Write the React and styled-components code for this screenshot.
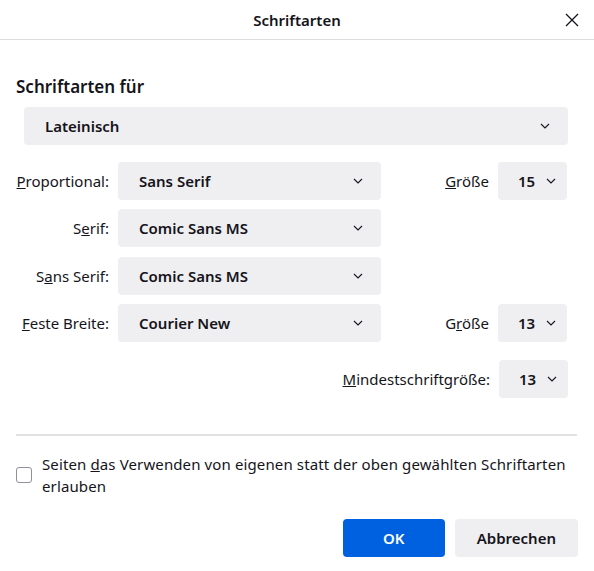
import React from 'react'
import styled, { createGlobalStyle } from 'styled-components'

const GlobalStyle = createGlobalStyle`
  html, body {
    margin: 0;
    padding: 0;
    background: #ffffff;
  }
  body {
    font-family: "Noto Sans", "Open Sans", sans-serif;
    color: #15141a;
    font-size: 15px;
  }
`

const Dialog = styled.div`
  width: 594px;
  height: 571px;
  background: #ffffff;
  display: flex;
  flex-direction: column;
`

const TitleBar = styled.div`
  height: 40px;
  display: grid;
  grid-template-columns: 1fr auto 1fr;
  align-items: center;
  border-bottom: 1px solid #dcdcdf;
  box-sizing: border-box;
`

const Title = styled.div`
  grid-column: 2;
  font-size: 15px;
  font-weight: 600;
`

const CloseButton = styled.button`
  grid-column: 3;
  justify-self: end;
  margin-right: 10px;
  width: 24px;
  height: 24px;
  display: flex;
  align-items: center;
  justify-content: center;
  border: none;
  background: transparent;
  padding: 0;
  color: #15141a;
`

const Body = styled.div`
  padding: 0 16px;
  display: flex;
  flex-direction: column;
`

const Heading = styled.h2`
  margin: 34px 0 0;
  font-size: 17px;
  font-weight: 600;
  line-height: 26px;
`

const Select = styled.div`
  height: 38px;
  box-sizing: border-box;
  background: #efeff1;
  border-radius: 4px;
  display: flex;
  align-items: center;
  justify-content: space-between;
  padding: 0 ${p => (p.$compact ? '11px' : '18px')} 0 ${p => (p.$compact ? '20px' : '21px')};
  font-weight: 600;
  font-size: 15px;
  gap: 6px;
`

const ScriptSelect = styled(Select)`
  margin: 7px 10px 0 8px;
`

const FontGrid = styled.div`
  margin-top: 17px;
  display: grid;
  grid-template-columns: 93px 263px 99px 69px;
  column-gap: 9px;
  row-gap: 9.3px;
  align-items: center;
`

const Label = styled.label`
  text-align: right;
  white-space: nowrap;
  font-size: 15px;
`

const MinRow = styled.div`
  margin-top: 18px;
  display: flex;
  justify-content: flex-end;
  align-items: center;
  gap: 9px;
  padding-right: 10px;
`

const SizeSelect = styled(Select)`
  width: 69px;
`

const Divider = styled.hr`
  margin: 36px 0 0;
  border: none;
  border-top: 2px solid #e2e2e4;
  width: 561px;
`

const CheckRow = styled.label`
  margin-top: 17px;
  display: flex;
  align-items: center;
  gap: 10px;
  line-height: 22px;
  font-size: 15px;
  letter-spacing: 0.12px;
`

const Checkbox = styled.span`
  flex: none;
  width: 16px;
  height: 16px;
  box-sizing: border-box;
  border: 1px solid #8f8f9d;
  border-radius: 3px;
  background: #ffffff;
`

const Buttons = styled.div`
  margin-top: 22px;
  display: flex;
  justify-content: flex-end;
  gap: 10px;
`

const Button = styled.button`
  height: 38px;
  border: none;
  border-radius: 4px;
  font-family: inherit;
  font-size: 15px;
  font-weight: 600;
  padding: 0 22px;
  min-width: ${p => (p.$primary ? '102px' : '121px')};
  background: ${p => (p.$primary ? '#0061e0' : '#efeff1')};
  color: ${p => (p.$primary ? '#ffffff' : '#15141a')};
`

const Chevron = () => (
  <svg width="10" height="6" viewBox="0 0 10 6" fill="none">
    <path d="M1 1l4 4 4-4" stroke="#15141a" strokeWidth="1.1" />
  </svg>
)

const CloseIcon = () => (
  <svg width="14" height="14" viewBox="0 0 14 14" fill="none">
    <path d="M1 1l12 12M13 1L1 13" stroke="#15141a" strokeWidth="1.3" />
  </svg>
)

const Dropdown = ({ value, compact, as: Comp = Select }) => (
  <Comp $compact={compact}>
    <span>{value}</span>
    <Chevron />
  </Comp>
)

const App = () => {
  return (
    <Dialog>
      <GlobalStyle />
      <TitleBar>
        <Title>Schriftarten</Title>
        <CloseButton aria-label="Schließen">
          <CloseIcon />
        </CloseButton>
      </TitleBar>
      <Body>
        <Heading>Schriftarten für</Heading>
        <Dropdown as={ScriptSelect} value="Lateinisch" />
        <FontGrid>
          <Label><u>P</u>roportional:</Label>
          <Dropdown value="Sans Serif" />
          <Label><u>G</u>röße</Label>
          <Dropdown as={SizeSelect} compact value="15" />

          <Label>S<u>e</u>rif:</Label>
          <Dropdown value="Comic Sans MS" />
          <span />
          <span />

          <Label>S<u>a</u>ns Serif:</Label>
          <Dropdown value="Comic Sans MS" />
          <span />
          <span />

          <Label><u>F</u>este Breite:</Label>
          <Dropdown value="Courier New" />
          <Label>G<u>r</u>öße</Label>
          <Dropdown as={SizeSelect} compact value="13" />
        </FontGrid>
        <MinRow>
          <Label><u>M</u>indestschriftgröße:</Label>
          <Dropdown as={SizeSelect} compact value="13" />
        </MinRow>
        <Divider />
        <CheckRow>
          <Checkbox />
          <span>
            Seiten <u>d</u>as Verwenden von eigenen statt der oben gewählten Schriftarten erlauben
          </span>
        </CheckRow>
        <Buttons>
          <Button $primary>OK</Button>
          <Button>Abbrechen</Button>
        </Buttons>
      </Body>
    </Dialog>
  )
}

export default App
